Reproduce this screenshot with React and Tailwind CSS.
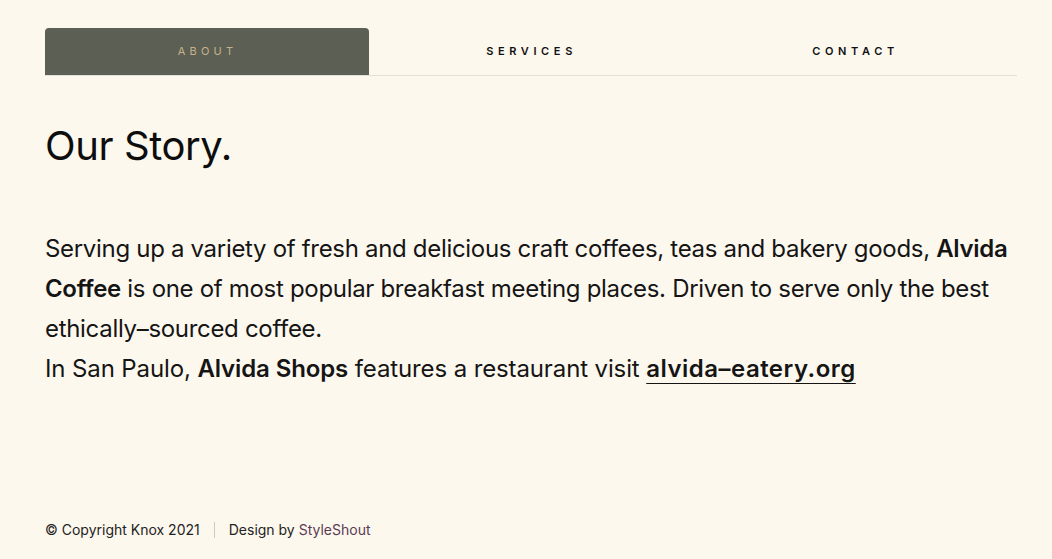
export default function App() {
  return (
    <div className="min-h-[559px] bg-[#fdf8ee] text-[#151515] font-['Inter',sans-serif] pl-[45px] pr-[35px] pt-[28px] pb-[19px] flex flex-col">
      <nav className="grid grid-cols-3 border-b border-[#e3e0d8]">
        <a className="h-[47px] flex items-center justify-center bg-[#5c5f54] rounded-t-[4px] text-[#c9b08b] text-[11px] tracking-[0.38em] uppercase pl-[0.1em]">About</a>
        <a className="h-[47px] flex items-center justify-center text-[#111] text-[11px] font-semibold tracking-[0.42em] uppercase pl-[0.1em]">Services</a>
        <a className="h-[47px] flex items-center justify-center text-[#111] text-[11px] font-semibold tracking-[0.42em] uppercase pl-[0.1em]">Contact</a>
      </nav>
      <h1 className="mt-[45px] text-[40px] leading-[50px] tracking-[-0.01em] text-[#0d0d0d]">Our Story.</h1>
      <p className="mt-[58px] text-[24px] leading-[40px] tracking-[-0.013em] text-[#151515]">
        Serving up a variety of fresh and delicious craft coffees, teas and bakery goods, <strong className="font-semibold">Alvida Coffee</strong> is one of most popular breakfast meeting places. Driven to serve only the best ethically–sourced coffee.
        <br />
        <span className="tracking-[-0.005em]">In San Paulo, <strong className="font-semibold">Alvida Shops</strong> features a restaurant visit <a className="font-semibold tracking-[0.02em] underline decoration-1 underline-offset-[6px]">alvida–eatery.org</a></span>
      </p>
      <footer className="mt-auto flex items-center text-[14px] text-[#222]">
        <span>© Copyright Knox 2021</span>
        <span className="mx-[14px] h-[16px] w-px bg-[#cfcac0]"></span>
        <span>Design by <a className="text-[#5c3b52]">StyleShout</a></span>
      </footer>
    </div>
  );
}
